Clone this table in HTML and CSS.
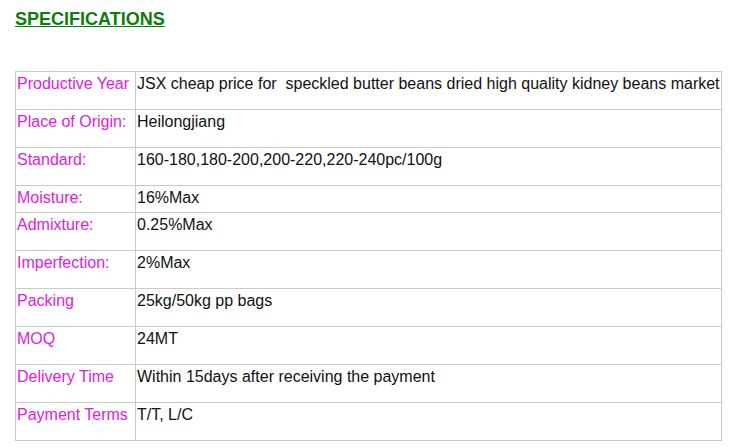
FILE: index.html
```html
<!DOCTYPE html>
<html>
<head>
<meta charset="utf-8">
<link rel="stylesheet" href="styles.css">
</head>
<body>
<div class="page">
  <h2 class="title">SPECIFICATIONS</h2>
  <table class="specs">
    <colgroup><col class="c1"><col class="c2"></colgroup>
    <tr class="row"><td class="label">Productive Year</td><td>JSX cheap price for &nbsp;speckled butter beans dried high quality kidney beans market</td></tr>
    <tr class="row"><td class="label">Place of Origin:</td><td>Heilongjiang</td></tr>
    <tr class="row"><td class="label">Standard:</td><td>160-180,180-200,200-220,220-240pc/100g</td></tr>
    <tr class="row short"><td class="label">Moisture:</td><td>16%Max</td></tr>
    <tr class="row"><td class="label">Admixture:</td><td>0.25%Max</td></tr>
    <tr class="row"><td class="label">Imperfection:</td><td>2%Max</td></tr>
    <tr class="row"><td class="label">Packing</td><td>25kg/50kg pp bags</td></tr>
    <tr class="row"><td class="label">MOQ</td><td>24MT</td></tr>
    <tr class="row"><td class="label">Delivery Time</td><td>Within 15days after receiving the payment</td></tr>
    <tr class="row"><td class="label">Payment Terms</td><td>T/T, L/C</td></tr>
  </table>
</div>
</body>
</html>
```

FILE: styles.css
```css
html, body {
  margin: 0;
  padding: 0;
  background: #ffffff;
}
.page {
  padding: 9px 0 0 15px;
  font-family: "Liberation Sans", Arial, sans-serif;
  font-size: 16px;
  color: #111;
}
.title {
  margin: 0;
  font-size: 18px;
  line-height: 21px;
  font-weight: bold;
  color: #0a7d0a;
  text-decoration: underline;
}
.specs {
  margin-top: 41px;
  border-collapse: collapse;
  width: 707px;
  table-layout: fixed;
}
.c1 { width: 120px; }
.specs td {
  border: 1px solid #cacaca;
  padding: 3px 1px 0 1px;
  vertical-align: top;
  line-height: 18px;
  white-space: nowrap;
  color: #111;
}
.specs td.label {
  color: #e020e0;
}
.row { height: 38px; }
.row.short { height: 27px; }
```
